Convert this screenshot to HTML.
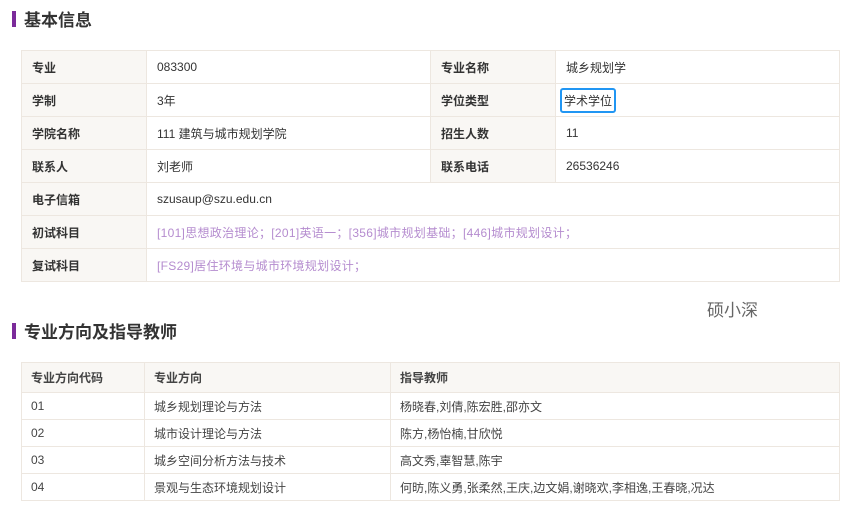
<!DOCTYPE html>
<html><head><meta charset="utf-8"><style>
*{margin:0;padding:0;box-sizing:border-box}
body{width:846px;height:507px;background:#fff;font-family:"Liberation Sans","Noto Sans CJK SC",sans-serif;color:#333;position:relative;overflow:hidden;font-size:12px}
.h{position:absolute;left:12px;font-size:17px;color:#333;display:flex;align-items:center;font-weight:bold}
.h:before{content:"";display:inline-block;width:4px;height:16px;background:#7b2a9a;margin-right:8px}
table{position:absolute;left:21px;width:819px;border-collapse:collapse}
td{border:1px solid #ede7e0;padding:0 0 0 10px;vertical-align:middle}
.t1 td{height:33px}
.l{background:#f9f7f4;font-weight:bold;color:#333}
.p{color:#b58ccf;letter-spacing:0.3px}
.t2 td{height:27px;color:#444}
.t2 tr:first-child td{height:30px;background:#f9f7f4;font-weight:bold;padding-left:9px}
.t2 td{padding-left:9px}
.sel{display:inline-block;border:2px solid #2196f3;border-radius:3px;padding:2px 2px;margin-left:-6px}
</style></head><body>
<div class="h" style="top:6px">基本信息</div>
<table class="t1" style="top:50px">
<colgroup><col style="width:125px"><col style="width:284px"><col style="width:125px"><col></colgroup>
<tr><td class="l">专业</td><td>083300</td><td class="l">专业名称</td><td>城乡规划学</td></tr>
<tr><td class="l">学制</td><td>3年</td><td class="l">学位类型</td><td><span class="sel">学术学位</span></td></tr>
<tr><td class="l">学院名称</td><td>111 建筑与城市规划学院</td><td class="l">招生人数</td><td>11</td></tr>
<tr><td class="l">联系人</td><td>刘老师</td><td class="l">联系电话</td><td>26536246</td></tr>
<tr><td class="l">电子信箱</td><td colspan="3">szusaup@szu.edu.cn</td></tr>
<tr><td class="l">初试科目</td><td colspan="3" class="p">[101]思想政治理论；[201]英语一；[356]城市规划基础；[446]城市规划设计；</td></tr>
<tr><td class="l">复试科目</td><td colspan="3" class="p">[FS29]居住环境与城市环境规划设计；</td></tr>
</table>
<div style="position:absolute;left:707px;top:296px;font-size:17px;color:#666">硕小深</div>
<div class="h" style="top:318px">专业方向及指导教师</div>
<table class="t2" style="top:362px">
<colgroup><col style="width:123px"><col style="width:246px"><col></colgroup>
<tr><td>专业方向代码</td><td>专业方向</td><td>指导教师</td></tr>
<tr><td>01</td><td>城乡规划理论与方法</td><td>杨晓春,刘倩,陈宏胜,邵亦文</td></tr>
<tr><td>02</td><td>城市设计理论与方法</td><td>陈方,杨怡楠,甘欣悦</td></tr>
<tr><td>03</td><td>城乡空间分析方法与技术</td><td>高文秀,辜智慧,陈宇</td></tr>
<tr><td>04</td><td>景观与生态环境规划设计</td><td>何昉,陈义勇,张柔然,王庆,边文娟,谢晓欢,李相逸,王春晓,况达</td></tr>
</table>
</body></html>
